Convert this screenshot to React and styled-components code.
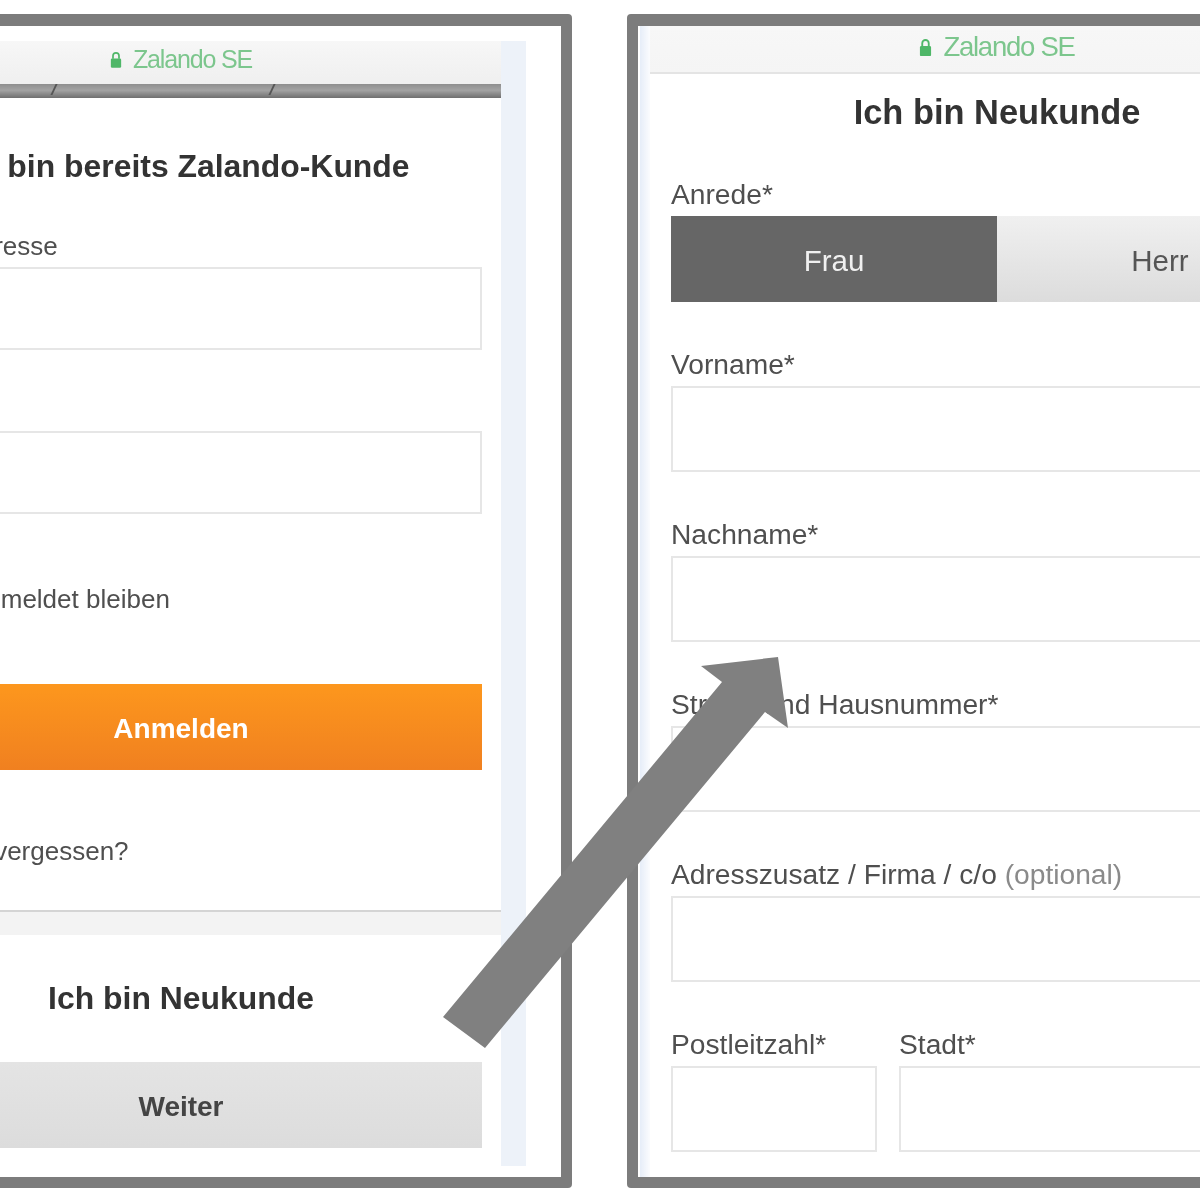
import React from 'react';
import styled, { createGlobalStyle } from 'styled-components';

const GlobalStyle = createGlobalStyle`
  html, body {
    margin: 0;
    padding: 0;
    background: #fff;
  }
  * {
    box-sizing: border-box;
  }
`;

const Page = styled.div`
  position: relative;
  display: flex;
  gap: 55px;
  width: 1200px;
  height: 1200px;
  padding-top: 14px;
  overflow: hidden;
  background: #fff;
  font-family: "Liberation Sans", Arial, sans-serif;
  color: #4f4f4f;
`;

const Frame = styled.div`
  flex: none;
  width: 742px;
  height: 1174px;
  margin-left: ${(p) => p.$offset || 0};
  border: 11px solid #7c7c7c;
  border-top-width: 12px;
  border-radius: 4px;
  background: #fff;
`;

/* left phone */
const LeftInner = styled.div`
  display: flex;
  height: 100%;
  padding: 15px 35px 11px 20px;
  filter: blur(0.6px);
`;

const LeftMain = styled.div`
  display: flex;
  flex-direction: column;
  flex: 1;
`;

const Strip = styled.div`
  flex: none;
  width: 25px;
  background: #edf2f9;
`;

const UrlBar = styled.div`
  display: flex;
  align-items: center;
  justify-content: center;
  gap: 11px;
  flex: none;
  height: ${(p) => p.$height}px;
  padding-bottom: ${(p) => p.$pad}px;
  background: linear-gradient(to bottom, #f7f7f7, ${(p) => p.$end});
  color: #7cc68d;
  font-size: ${(p) => p.$size}px;
  letter-spacing: ${(p) => p.$spacing}px;
`;

const GreyBar = styled.div`
  display: grid;
  grid-template-columns: 194px 218px 1fr;
  flex: none;
  height: 14px;
  background: linear-gradient(to bottom, #8e8e8e 0, #a3a3a3 45%, #8b8b8b 70%, #6f6f6f 100%);
`;

const BarPart = styled.span`
  position: relative;
  &:not(:last-child)::after {
    content: '';
    position: absolute;
    right: 0;
    top: 0;
    width: 2px;
    height: 11px;
    background: #555;
    transform: skewX(-25deg);
  }
`;

const Card = styled.div`
  flex: none;
  height: 814px;
  padding: 48px 19px 0;
  border-bottom: 2px solid #d4d4d4;
`;

const Band = styled.div`
  flex: none;
  height: 23px;
  background: #f3f3f3;
`;

const NewCustomer = styled.div`
  flex: 1;
  padding: 43px 19px 0;
`;

const Heading = styled.h2`
  margin: 0;
  height: 40px;
  color: #333;
  font-size: ${(p) => p.$size}px;
  font-weight: 700;
  line-height: 40px;
  text-align: center;
  white-space: nowrap;
`;

const Label = styled.div`
  height: 30px;
  margin-top: ${(p) => p.$top || 0}px;
  margin-bottom: ${(p) => p.$bottom || 6}px;
  font-size: ${(p) => p.$size || 26}px;
  line-height: 30px;
  white-space: nowrap;
`;

const Optional = styled.span`
  color: #8a8a8a;
`;

const Input = styled.div`
  height: ${(p) => p.$height || 86}px;
  border: 2px solid #e6e6e6;
  background: #fff;
`;

const CheckRow = styled.div`
  display: flex;
  align-items: center;
  gap: 36px;
  height: 30px;
  margin-top: 70px;
  font-size: 26px;
`;

const CheckBox = styled.span`
  width: 24px;
  height: 24px;
  border: 2px solid #ccc;
`;

const ForgotLink = styled.div`
  height: 30px;
  margin-top: 66px;
  font-size: 26px;
  line-height: 30px;
`;

const Button = styled.div`
  display: flex;
  align-items: center;
  justify-content: center;
  height: 86px;
  margin-top: ${(p) => p.$top}px;
  padding-top: 4px;
  background: ${(p) =>
    p.$orange
      ? 'linear-gradient(to bottom, #fd971d, #f08020)'
      : 'linear-gradient(to bottom, #e4e4e4, #dcdcdc)'};
  color: ${(p) => (p.$orange ? '#fff' : '#444')};
  font-size: 28px;
  font-weight: 700;
`;

/* right phone */
const RightInner = styled.div`
  display: flex;
  height: 100%;
  padding-left: 2px;
  filter: blur(0.6px);
`;

const LeftGlow = styled.div`
  flex: none;
  width: 10px;
  background: linear-gradient(to right, #e6edf8, #fbfcfe);
`;

const RightMain = styled.div`
  display: flex;
  flex-direction: column;
  flex: none;
  width: 694px;
`;

const RightBarLine = styled.div`
  flex: none;
  height: 2px;
  background: #e4e4e4;
`;

const Form = styled.div`
  width: 652px;
  margin-left: 21px;
  padding-top: 18px;
`;

const Toggle = styled.div`
  display: grid;
  grid-template-columns: 1fr 1fr;
  height: 86px;
`;

const ToggleOption = styled.div`
  display: flex;
  align-items: center;
  justify-content: center;
  padding-top: 4px;
  background: ${(p) => (p.$active ? '#666' : 'linear-gradient(to bottom, #f0f0f0, #dcdcdc)')};
  color: ${(p) => (p.$active ? '#f0f0f0' : '#555')};
  font-size: 29.5px;
`;

const Fields = styled.div`
  display: flex;
  flex-direction: column;
  gap: 47px;
  margin-top: 47px;
`;

const SplitRow = styled.div`
  display: grid;
  grid-template-columns: 206px 1fr;
  gap: 22px;
`;

const ArrowLayer = styled.svg`
  position: absolute;
  top: 0;
  left: 0;
  width: 1200px;
  height: 1200px;
  pointer-events: none;
`;

const LockIcon = ({ size }) => (
  <svg width={size} height={size * 1.45} viewBox="0 0 14 20">
    <path d="M3.5 9V5.5a3.5 3.5 0 0 1 7 0V9" fill="none" stroke="#4fb768" strokeWidth="2" />
    <rect x="1" y="8.5" width="12" height="11" rx="1.5" fill="#4fb768" />
  </svg>
);

const Field = ({ label }) => (
  <div>
    <Label $size={28.2} $bottom={7}>{label}</Label>
    <Input />
  </div>
);

const App = () => {
  return (
    <>
      <GlobalStyle />
      <Page>
        <Frame $offset="-170px">
          <LeftInner>
            <LeftMain>
              <UrlBar $height={43} $pad={6} $size={25} $spacing={-1.15} $end="#efefef">
                <LockIcon size={12} />
                Zalando SE
              </UrlBar>
              <GreyBar>
                <BarPart />
                <BarPart />
                <BarPart />
              </GreyBar>
              <Card>
                <Heading $size={31.9}>Ich bin bereits Zalando-Kunde</Heading>
                <Label $top={45}>E-Mail-Adresse</Label>
                <Input $height={83} />
                <Label $top={45}>Passwort</Label>
                <Input $height={83} />
                <CheckRow>
                  <CheckBox />
                  Angemeldet bleiben
                </CheckRow>
                <Button $orange $top={70}>Anmelden</Button>
                <ForgotLink>Passwort vergessen?</ForgotLink>
              </Card>
              <Band />
              <NewCustomer>
                <Heading $size={31.9}>Ich bin Neukunde</Heading>
                <Button $top={44}>Weiter</Button>
              </NewCustomer>
            </LeftMain>
            <Strip />
          </LeftInner>
        </Frame>

        <Frame>
          <RightInner>
            <LeftGlow />
            <RightMain>
              <UrlBar $height={46} $pad={4} $size={27.5} $spacing={-1.25} $end="#f5f5f5">
                <LockIcon size={13} />
                Zalando SE
              </UrlBar>
              <RightBarLine />
              <Form>
                <Heading $size={34.4}>Ich bin Neukunde</Heading>
                <Label $size={28.2} $top={47} $bottom={7}>Anrede*</Label>
                <Toggle>
                  <ToggleOption $active>Frau</ToggleOption>
                  <ToggleOption>Herr</ToggleOption>
                </Toggle>
                <Fields>
                  <Field label="Vorname*" />
                  <Field label="Nachname*" />
                  <Field label="Straße und Hausnummer*" />
                  <Field
                    label={
                      <>
                        Adresszusatz / Firma / c/o <Optional>(optional)</Optional>
                      </>
                    }
                  />
                  <SplitRow>
                    <Field label="Postleitzahl*" />
                    <Field label="Stadt*" />
                  </SplitRow>
                </Fields>
              </Form>
            </RightMain>
          </RightInner>
        </Frame>

        <ArrowLayer viewBox="0 0 1200 1200">
          <polygon
            points="443,1017 485,1048 765,712 788,728 778,657 701,666 722,682"
            fill="#808080"
          />
        </ArrowLayer>
      </Page>
    </>
  );
};

export default App;
